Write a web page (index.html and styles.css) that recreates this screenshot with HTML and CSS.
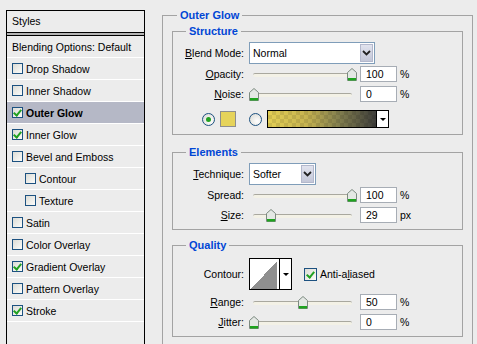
FILE: index.html
```html
<!DOCTYPE html>
<html>
<head>
  <title>Layer Style</title>
  <link rel="stylesheet" href="styles.css">
</head>
<body>
  <div class="dialog">
    <div class="styles-list">
      <div class="list-head">Styles</div>
      <div class="list-sep"></div>
      <div class="list-row">Blending Options: Default</div>
      <div class="list-row"><span class="check"></span>Drop Shadow</div>
      <div class="list-row"><span class="check"></span>Inner Shadow</div>
      <div class="list-row selected"><span class="check on"></span>Outer Glow</div>
      <div class="list-row"><span class="check on"></span>Inner Glow</div>
      <div class="list-row"><span class="check"></span>Bevel and Emboss</div>
      <div class="list-row sub"><span class="check"></span>Contour</div>
      <div class="list-row sub"><span class="check"></span>Texture</div>
      <div class="list-row"><span class="check"></span>Satin</div>
      <div class="list-row"><span class="check"></span>Color Overlay</div>
      <div class="list-row"><span class="check on"></span>Gradient Overlay</div>
      <div class="list-row"><span class="check"></span>Pattern Overlay</div>
      <div class="list-row"><span class="check on"></span>Stroke</div>
    </div>

    <div class="options">
      <div class="group outer">
        <div class="group-title">Outer Glow</div>

        <div class="group structure">
          <div class="group-title">Structure</div>
          <div class="row tall">
            <label class="label"><u>B</u>lend Mode:</label>
            <div class="select blend"><span class="select-text">Normal</span><span class="select-btn"><svg width="9" height="6" viewBox="0 0 9 6"><path d="M1 1l3.5 3.5L8 1" fill="none" stroke="#222" stroke-width="1.8"/></svg></span></div>
          </div>
          <div class="row">
            <label class="label"><u>O</u>pacity:</label>
            <div class="slider"><div class="track"></div><span class="thumb" style="left: 98px"><svg width="10" height="13" viewBox="0 0 10 13"><path d="M0.5 12.5V4.5L5 0.5L9.5 4.5V12.5Z" fill="#e4e8e4" stroke="#7c8a80"/><rect x="1" y="10" width="8" height="2.5" fill="#1fa31f"/></svg></span></div>
            <div class="num">100</div><span class="unit">%</span>
          </div>
          <div class="row">
            <label class="label"><u>N</u>oise:</label>
            <div class="slider"><div class="track"></div><span class="thumb" style="left: 0px"><svg width="10" height="13" viewBox="0 0 10 13"><path d="M0.5 12.5V4.5L5 0.5L9.5 4.5V12.5Z" fill="#e4e8e4" stroke="#7c8a80"/><rect x="1" y="10" width="8" height="2.5" fill="#1fa31f"/></svg></span></div>
            <div class="num">0</div><span class="unit">%</span>
          </div>
          <div class="row color-row">
            <span class="radio on"></span>
            <span class="swatch"></span>
            <span class="radio second"></span>
            <div class="gradient"><div class="gradient-fill"></div><div class="drop"><span class="tri"></span></div></div>
          </div>
        </div>

        <div class="group elements">
          <div class="group-title">Elements</div>
          <div class="row tall">
            <label class="label"><u>T</u>echnique:</label>
            <div class="select technique"><span class="select-text">Softer</span><span class="select-btn"><svg width="9" height="6" viewBox="0 0 9 6"><path d="M1 1l3.5 3.5L8 1" fill="none" stroke="#222" stroke-width="1.8"/></svg></span></div>
          </div>
          <div class="row">
            <label class="label">Spread:</label>
            <div class="slider"><div class="track"></div><span class="thumb" style="left: 98px"><svg width="10" height="13" viewBox="0 0 10 13"><path d="M0.5 12.5V4.5L5 0.5L9.5 4.5V12.5Z" fill="#e4e8e4" stroke="#7c8a80"/><rect x="1" y="10" width="8" height="2.5" fill="#1fa31f"/></svg></span></div>
            <div class="num">100</div><span class="unit">%</span>
          </div>
          <div class="row">
            <label class="label"><u>S</u>ize:</label>
            <div class="slider"><div class="track"></div><span class="thumb" style="left: 17px"><svg width="10" height="13" viewBox="0 0 10 13"><path d="M0.5 12.5V4.5L5 0.5L9.5 4.5V12.5Z" fill="#e4e8e4" stroke="#7c8a80"/><rect x="1" y="10" width="8" height="2.5" fill="#1fa31f"/></svg></span></div>
            <div class="num">29</div><span class="unit">px</span>
          </div>
        </div>

        <div class="group quality">
          <div class="group-title">Quality</div>
          <div class="row contour-row">
            <label class="label">Contour:</label>
            <div class="contour"><div class="contour-preview"></div><div class="drop"><span class="tri"></span></div></div>
            <span class="check big on"></span>
            <span class="check-label">Anti-a<u>l</u>iased</span>
          </div>
          <div class="row">
            <label class="label"><u>R</u>ange:</label>
            <div class="slider"><div class="track"></div><span class="thumb" style="left: 49px"><svg width="10" height="13" viewBox="0 0 10 13"><path d="M0.5 12.5V4.5L5 0.5L9.5 4.5V12.5Z" fill="#e4e8e4" stroke="#7c8a80"/><rect x="1" y="10" width="8" height="2.5" fill="#1fa31f"/></svg></span></div>
            <div class="num">50</div><span class="unit">%</span>
          </div>
          <div class="row">
            <label class="label"><u>J</u>itter:</label>
            <div class="slider"><div class="track"></div><span class="thumb" style="left: 0px"><svg width="10" height="13" viewBox="0 0 10 13"><path d="M0.5 12.5V4.5L5 0.5L9.5 4.5V12.5Z" fill="#e4e8e4" stroke="#7c8a80"/><rect x="1" y="10" width="8" height="2.5" fill="#1fa31f"/></svg></span></div>
            <div class="num">0</div><span class="unit">%</span>
          </div>
        </div>
      </div>
    </div>
  </div>
</body>
</html>
```

FILE: styles.css
```css
body {
  margin: 0;
  background-color: #ececec;
  font-family: "Liberation Sans", Arial, sans-serif;
  font-size: 10.5px;
  color: #000;
}

.dialog {
  display: flex;
  height: 344px;
  overflow: hidden;
}

/* Styles list on the left */

.styles-list {
  flex-shrink: 0;
  width: 139px;
  height: 400px;
  margin: 10px 0 0 6px;
  border: 1px solid #000;
  border-bottom: none;
  box-sizing: border-box;
}

.list-head {
  height: 21px;
  line-height: 21px;
  padding-left: 5px;
  border-bottom: 1px solid #000;
}

.list-sep {
  height: 2px;
  background-color: #b4b4b4;
  border-bottom: 1px solid #000;
}

.list-row {
  display: flex;
  align-items: center;
  height: 21px;
  padding-left: 5px;
  border-bottom: 1px solid #fff;
}

.list-row.selected {
  background-color: #b5b8c6;
  font-weight: bold;
}

.list-row.sub {
  padding-left: 18px;
}

.check {
  width: 11px;
  height: 11px;
  margin-right: 3px;
  border: 1px solid #1c5180;
  box-sizing: border-box;
  background: linear-gradient(135deg, #dcdcd6, #fbfbf9);
  flex-shrink: 0;
  position: relative;
}

.check.on::after {
  content: "";
  position: absolute;
  left: 2px;
  top: 0px;
  width: 3px;
  height: 6px;
  border: solid #21a121;
  border-width: 0 2px 2px 0;
  transform: rotate(40deg);
}

.check.big {
  width: 13px;
  height: 13px;
  margin-left: 12px;
}

.check.big.on::after {
  left: 3px;
  top: 1px;
  width: 3px;
  height: 6px;
}

/* Option groups */

.options {
  margin-left: 17px;
}

.group {
  border: 1px solid #a3a3a3;
  box-sizing: border-box;
}

.group-title {
  width: fit-content;
  margin: -8px 0 0 13px;
  padding: 0 3px;
  line-height: 14px;
  background-color: #ececec;
  color: #0046d5;
  font-weight: bold;
  font-size: 11px;
}

.outer {
  width: 311px;
  height: 400px;
  margin-top: 15px;
  border-bottom: none;
}

.outer > .group-title {
  margin-left: 14px;
}

.structure {
  margin: 9px 9px 0 9px;
  height: 104px;
}

.elements {
  margin: 17px 9px 0 9px;
  padding-bottom: 4px;
}

.quality {
  margin: 15px 9px 0 9px;
  padding-bottom: 4px;
}

.row {
  display: flex;
  align-items: center;
  height: 20px;
}

.row.tall {
  height: 22px;
  margin-top: 4px;
}

.label {
  width: 71px;
  margin-right: 5px;
  text-align: right;
  flex-shrink: 0;
}

.select {
  display: flex;
  height: 22px;
  border: 1px solid #7f9db9;
  box-sizing: border-box;
  background-color: #fff;
}

.select.blend {
  width: 126px;
}

.select.technique {
  width: 67px;
}

.select-text {
  flex: 1;
  padding-left: 3px;
  line-height: 20px;
}

.select-btn {
  display: flex;
  align-items: center;
  justify-content: center;
  width: 13px;
  margin: 1px 1px 1px 0;
  border: 1px solid #b3b8cc;
  box-sizing: border-box;
  background: linear-gradient(#e1e3ee, #c3c7d8);
}

.slider {
  position: relative;
  width: 107px;
  height: 20px;
  display: flex;
  align-items: center;
}

.track {
  flex: 1;
  height: 3px;
  margin: 1px 4px 0 4px;
  border-top: 1px solid #a9a89f;
  border-radius: 2px;
  background-color: #f3f1e6;
}

.thumb {
  position: absolute;
  top: 4px;
  width: 10px;
  height: 13px;
}

.thumb svg {
  display: block;
}

.num {
  width: 37px;
  height: 16px;
  margin-left: 4px;
  padding-left: 5px;
  border: 1px solid #a7adb5;
  box-sizing: border-box;
  background-color: #fff;
  line-height: 14px;
}

.unit {
  margin-left: 3px;
}

.color-row {
  height: 30px;
  padding-left: 29px;
}

.radio {
  width: 13px;
  height: 13px;
  border: 1px solid #1c5180;
  border-radius: 50%;
  box-sizing: border-box;
  background: radial-gradient(circle at 65% 65%, #fff, #d7d7d0);
  position: relative;
}

.radio.on::after {
  content: "";
  position: absolute;
  left: 3px;
  top: 3px;
  width: 5px;
  height: 5px;
  border-radius: 50%;
  background-color: #21a121;
}

.radio.second {
  margin-left: 13px;
}

.swatch {
  width: 16px;
  height: 16px;
  margin-left: 5px;
  border: 1px solid #8e8e8e;
  box-sizing: border-box;
  background-color: #e6d35a;
}

.gradient {
  display: flex;
  width: 122px;
  height: 18px;
  margin-left: 5px;
  border: 1px solid #000;
  box-sizing: border-box;
}

.gradient-fill {
  flex: 1;
  background:
    conic-gradient(rgba(0, 0, 0, 0.09) 25%, transparent 0 50%, rgba(0, 0, 0, 0.09) 0 75%, transparent 0) 0 0 / 8px 8px,
    linear-gradient(to right, #e3cf55, #c7b450 35%, #84804f 65%, #3d3d3a);
}

.drop {
  display: flex;
  align-items: center;
  justify-content: center;
  width: 11px;
  border-left: 1px solid #000;
  background-color: #fff;
}

.tri {
  width: 0;
  height: 0;
  border-left: 3px solid transparent;
  border-right: 3px solid transparent;
  border-top: 3px solid #000;
}

.contour-row {
  height: 32px;
  margin-top: 6px;
  margin-bottom: 2px;
}

.contour {
  display: flex;
  width: 43px;
  height: 32px;
  border: 1px solid #000;
  box-sizing: border-box;
}

.contour-preview {
  flex: 1;
  border: 2px solid #fff;
  border-bottom: none;
  border-left-width: 1px;
  background: linear-gradient(to top left, #8f8f8f 50%, #fff 50%);
}
```
